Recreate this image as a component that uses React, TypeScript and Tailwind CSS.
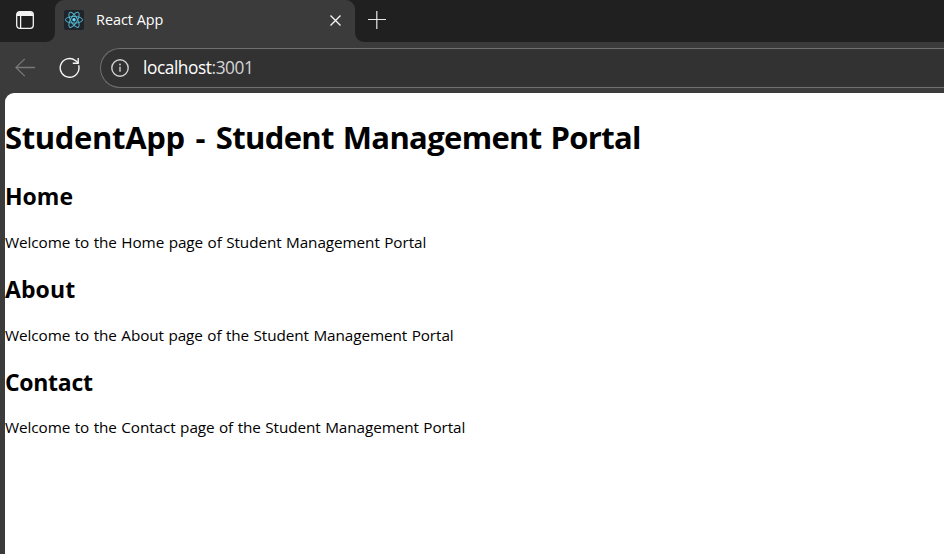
const sections = [
  { title: "Home", text: "Welcome to the Home page of Student Management Portal", titleClass: "mt-[22px]", textClass: "mt-5" },
  { title: "About", text: "Welcome to the About page of the Student Management Portal", titleClass: "mt-5 tracking-[0.1px]", textClass: "mt-5" },
  { title: "Contact", text: "Welcome to the Contact page of the Student Management Portal", titleClass: "mt-5 tracking-[-0.3px]", textClass: "mt-[19px]" },
];

function WorkspaceIcon() {
  return (
    <svg width="18" height="18" viewBox="0 0 18 18" fill="none" stroke="#f4f4f4" strokeWidth="1.3">
      <rect x="0.7" y="0.7" width="16.6" height="16.6" rx="3" />
      <path d="M1 3.5a2.5 2.5 0 0 1 2.5-2.5h11a2.5 2.5 0 0 1 2.5 2.5V5H1z" fill="#f4f4f4" stroke="none" />
      <path d="M4.6 5v12" />
    </svg>
  );
}

function ReactLogo() {
  return (
    <svg width="20" height="20" viewBox="0 0 20 20" fill="none" stroke="#4fb3cb" strokeWidth="1">
      <rect width="20" height="20" rx="2" fill="#20232a" stroke="none" />
      <g transform="translate(10 9.8)">
        <circle r="1.7" fill="#61dafb" stroke="none" />
        <ellipse rx="8.6" ry="3.3" />
        <ellipse rx="8.6" ry="3.3" transform="rotate(60)" />
        <ellipse rx="8.6" ry="3.3" transform="rotate(120)" />
      </g>
    </svg>
  );
}

function TitleBar() {
  return (
    <div className="flex h-[42px] shrink-0 bg-[#3b3b3b]">
      <div className="flex w-[55px] items-start rounded-br-[9px] bg-[#202020] pl-4 pt-[11px]">
        <WorkspaceIcon />
      </div>
      <div className="w-[300px] bg-[#202020]">
        <div className="flex h-full items-start rounded-t-[9px] bg-[#3b3b3b] pl-[9px] pt-[10px]">
          <ReactLogo />
          <span className="ml-3 w-[234px] text-[14.4px] leading-5 text-white">React App</span>
          <svg className="mt-[5px]" width="11" height="11" viewBox="0 0 11 11" stroke="#f4f4f4" strokeWidth="1.4">
            <path d="M0.5 0.5l10 10M10.5 0.5l-10 10" />
          </svg>
        </div>
      </div>
      <div className="flex-1 rounded-bl-[9px] bg-[#202020] pl-[13px] pt-[11px]">
        <svg width="18" height="18" viewBox="0 0 18 18" stroke="#e8e8e8" strokeWidth="1.2">
          <path d="M0 8.5h18M8.8 0v18" />
        </svg>
      </div>
    </div>
  );
}

function Toolbar() {
  return (
    <div className="flex h-[51px] shrink-0 items-start bg-[#3b3b3b] pt-[6px]">
      <svg className="ml-[15px] mt-[10px]" width="20" height="19" viewBox="0 0 20 19" fill="none" stroke="#777777" strokeWidth="1.3">
        <path d="M9.8 0.9L0.9 9.5l8.9 8.6M1 9.5h19" />
      </svg>
      <svg className="ml-[24px] mt-[9px]" width="22" height="22" viewBox="0 0 22 22" fill="none" stroke="#f4f4f4" strokeWidth="1.4">
        <path d="M19.6 8.2A9.4 9.4 0 1 1 16.4 3.5l2.8 2.4" />
        <path d="M19.2 1v5.3h-5.4" />
      </svg>
      <div className="ml-[19px] flex h-10 flex-1 items-center rounded-l-full border border-r-0 border-[#707070] bg-[#323232] pl-[10px]">
        <svg width="18" height="18" viewBox="0 0 18 18" fill="none" stroke="#d0d0d0" strokeWidth="1.4">
          <circle cx="9" cy="9" r="8.2" />
          <path d="M9 7.8v5" />
          <circle cx="9" cy="5.5" r="0.9" fill="#d0d0d0" stroke="none" />
        </svg>
        <span className="ml-[14px] text-[17.3px] leading-6 tracking-[-0.43px] text-white">
          localhost<span className="text-[#d5d5d5]">:3001</span>
        </span>
      </div>
    </div>
  );
}

export default function App() {
  return (
    <div className="flex h-[554px] w-full flex-col overflow-hidden bg-[#3b3b3b] font-['Open_Sans','Noto_Sans',sans-serif]">
      <TitleBar />
      <Toolbar />
      <main className="ml-[5px] flex-1 rounded-tl-[9px] bg-white pt-[23px] text-black">
        <h1 className="-mb-px whitespace-nowrap text-[31px] font-bold leading-[43px] tracking-[-0.67px] [word-spacing:1.6px]">
          <span className="tracking-[-0.35px] [word-spacing:3px]">StudentApp - </span>Student Management Portal
        </h1>
        {sections.map((s) => (
          <section key={s.title}>
            <h2 className={`text-[23px] font-bold leading-8 ${s.titleClass}`}>{s.title}</h2>
            <p className={`whitespace-nowrap text-[15.3px] leading-[21px] tracking-[-0.09px] [word-spacing:0.6px] ${s.textClass}`}>{s.text}</p>
          </section>
        ))}
      </main>
    </div>
  );
}
